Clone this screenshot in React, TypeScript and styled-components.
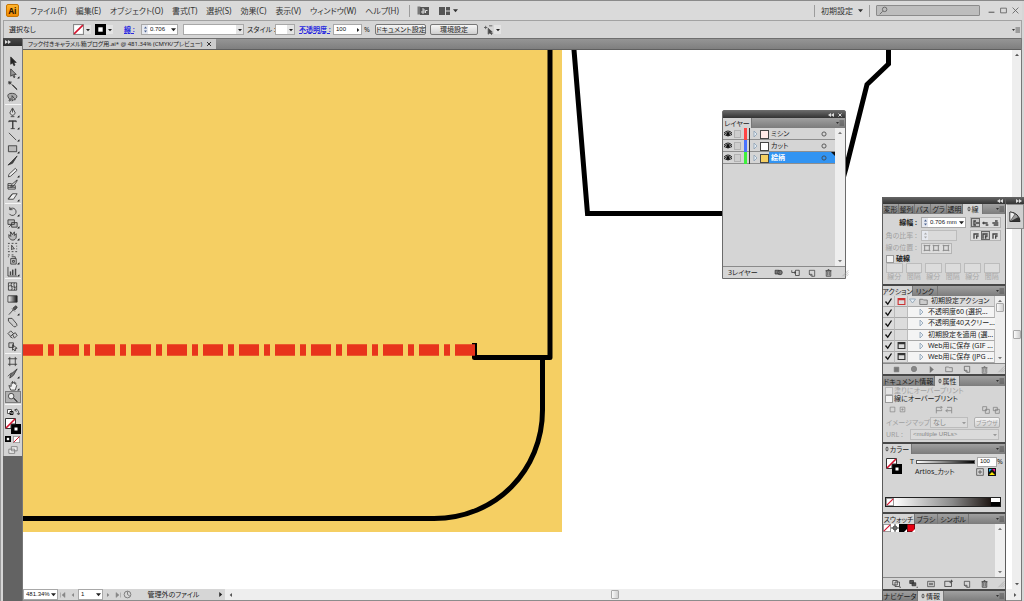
import React from "react";
import styled, { createGlobalStyle, css } from "styled-components";

const Global = createGlobalStyle`
  * { box-sizing: border-box; }
  body { margin: 0; overflow: hidden; background: #d4d4d4; }
  body, button, input, select {
    font-family: "Noto Sans", "Noto Sans CJK JP", sans-serif;
    font-feature-settings: "palt";
    font-size: 7px;
    line-height: 10px;
    color: #222;
  }
  button { border: 0; padding: 0; background: none; white-space: nowrap; }
  input, select { border: 0; margin: 0; padding: 0; min-width: 0; border-radius: 0; outline: 0; }
  svg { display: block; flex: none; }
  a { color: #2a2ae0; }
`;

/* ---------- window frame ---------- */

const Window = styled.div`
  position: relative;
  height: 100vh;
  display: flex;
  flex-direction: column;
  overflow: hidden;
  padding: 0 2px 0 2px;
  background: #d6d6d6;
  border-top: 1px solid #8a8a8a;
  border-left: 1px solid #9a9a9a;
`;

const MenuBar = styled.header`
  display: flex;
  align-items: center;
  height: 19px;
  padding-left: 3px;
  background: #dadada;
`;

const AppLogo = styled.div`
  width: 13px;
  height: 13px;
  margin-right: 11px;
  border: 1px solid #c77400;
  border-radius: 2px;
  background: linear-gradient(#ffb52e, #f08a00);
  color: #2d1500;
  font-size: 8px;
  font-weight: 700;
  line-height: 11px;
  text-align: center;
`;

const Menus = styled.nav`
  display: flex;
  gap: 9px;
  margin-right: 3px;
`;

const MenuButton = styled.button`
  font-size: 8px;
  color: #333;
`;

const MenuDivider = styled.i<{ $m?: number }>`
  width: 1px;
  height: 12px;
  margin: 0 ${(p) => p.$m ?? 7}px;
  background: #9c9c9c;
`;

const Spacer = styled.div`
  flex: 1;
`;

const Search = styled.label`
  display: flex;
  align-items: center;
  width: 104px;
  height: 11px;
  padding-left: 2px;
  border: 1px solid #8b8b8b;
  border-radius: 1px;
  background: #bdbdbd;
  input { flex: 1; height: 8px; background: transparent; }
`;

const WindowButtons = styled.div`
  display: flex;
  gap: 5px;
  margin: 0 3px 0 8px;
`;

const ControlBar = styled.div`
  display: flex;
  align-items: center;
  height: 18px;
  padding-left: 5px;
  border: 1px solid #a2a2a2;
  border-bottom: 0;
  background: #d6d6d6;
`;

const Cell = styled.div<{ $w: number; $gap?: number }>`
  display: flex;
  align-items: center;
  flex: none;
  width: ${(p) => p.$w}px;
  margin-right: ${(p) => p.$gap ?? 0}px;
  white-space: nowrap;
`;

const Link = styled.a`
  font-weight: 700;
  text-decoration: underline dashed 1px;
  white-space: nowrap;
`;

const PushButton = styled.button<{ $w: number; $off?: boolean }>`
  width: ${(p) => p.$w}px;
  height: 11px;
  border: 1px solid ${(p) => (p.$off ? "#b0b0b0" : "#777")};
  border-radius: 2px;
  background: linear-gradient(#f6f6f6, #cfcfcf);
  color: ${(p) => (p.$off ? "#999" : "#222")};
  font-size: ${(p) => (p.$off ? 6 : 7)}px;
  line-height: 8px;
`;

const Field = styled.div<{ $w: number; $off?: boolean; $h?: number }>`
  display: flex;
  align-items: center;
  flex: none;
  width: ${(p) => p.$w}px;
  height: ${(p) => p.$h ?? 11}px;
  border: 1px solid ${(p) => (p.$off ? "#bcbcbc" : "#a8a8a8")};
  background: ${(p) => (p.$off ? "#dadada" : "#fff")};
  input, select {
    flex: 1;
    height: 9px;
    width: 0;
    padding-left: 2px;
    font-family: "Liberation Sans", "Noto Sans CJK JP", sans-serif;
    font-size: 6px;
    line-height: 9px;
    background: transparent;
    appearance: none;
    opacity: 1;
    color: ${(p) => (p.$off ? "#888" : "#111")};
  }
  select { font-size: 7px; }
`;

const ArrowButton = styled.button<{ $plain?: boolean }>`
  flex: none;
  display: grid;
  place-items: center;
  width: 7px;
  height: 9px;
  background: ${(p) => (p.$plain ? "transparent" : "#e4e4e4")};
`;

const SpinBox = styled.button`
  flex: none;
  display: grid;
  place-items: center;
  width: 6px;
  height: 9px;
  background: #e6e9f0;
`;

/* ---------- work area ---------- */

const Work = styled.div`
  flex: 1;
  min-height: 0;
  display: flex;
`;

const ToolColumn = styled.aside`
  width: 20px;
  display: flex;
  flex-direction: column;
  background: #636363;
  border-right: 1px solid #777;
`;

const ToolHead = styled.div`
  height: 8px;
  padding: 2px 2px;
  background: linear-gradient(#4a4a4a, #2e2e2e);
`;

const Tools = styled.div`
  display: flex;
  flex-direction: column;
  padding: 9px 1px 0;
  background: #d3d3d3;
  border-left: 1px solid #999;
`;

const ToolGroup = styled.div`
  display: flex;
  flex-direction: column;
  & + & { margin-top: 1px; padding-top: 1px; border-top: 1px solid #f4f4f4; }
`;

const ToolButton = styled.button<{ $on?: boolean }>`
  display: grid;
  place-items: center;
  height: 12px;
  ${(p) =>
    p.$on &&
    css`
      background: #b2b2b2;
      box-shadow: inset 0 0 0 1px #7d7d7d;
    `}
`;

const Doc = styled.main`
  flex: 1;
  min-width: 0;
  display: flex;
  flex-direction: column;
  border-right: 1px solid #777;
`;

const DocTabs = styled.div`
  display: flex;
  height: 12px;
  background: linear-gradient(#959595, #7f7f7f);
  border-top: 1px solid #6f6f6f;
  border-bottom: 1px solid #5f5f5f;
`;

const DocTab = styled.button`
  display: flex;
  align-items: center;
  gap: 4px;
  padding: 0 4px 0 5px;
  background: #cccccc;
  color: #222;
  font-size: 6px;
  line-height: 10px;
`;

const DocView = styled.div`
  flex: 1;
  min-height: 0;
  display: flex;
`;

const Canvas = styled.div`
  flex: 1;
  min-width: 0;
  overflow: hidden;
  background: #fff;
`;

const VScroll = styled.div<{ $w?: number }>`
  flex: none;
  display: flex;
  flex-direction: column;
  align-items: center;
  justify-content: space-between;
  width: ${(p) => p.$w ?? 9}px;
  padding: 3px 0;
  background: #eeeeee;
`;

const Thumb = styled.i`
  width: 8px;
  height: 9px;
  border: 1px solid #a9a9a9;
  border-radius: 1px;
  background: linear-gradient(90deg, #fafafa, #d0d0d0);
`;

const Track = styled.div<{ $before: number; $after: number; $row?: boolean }>`
  flex: 1;
  display: flex;
  flex-direction: ${(p) => (p.$row ? "row" : "column")};
  align-items: center;
  &::before { content: ""; flex: ${(p) => p.$before}; }
  &::after { content: ""; flex: ${(p) => p.$after}; }
`;

const StatusBar = styled.footer`
  display: flex;
  align-items: center;
  height: 12px;
  background: #d6d6d6;
  border-bottom: 1px solid #8c8c8c;
`;

const StatusText = styled.span`
  flex: 1;
  text-align: center;
`;

const HScroll = styled.div`
  flex: 1;
  height: 11px;
  display: flex;
  align-items: center;
  padding: 0 4px;
  background: #eeeeee;
`;

const Nav = styled.button`
  width: 10px;
  height: 9px;
  display: grid;
  place-items: center;
`;

/* ---------- floating panels ---------- */

const FloatPanel = styled.section`
  position: absolute;
  top: 109px;
  right: 178px;
  width: 124px;
  border: 1px solid #6b6b6b;
  border-radius: 2px 2px 0 0;
  background: #d5d5d5;
`;

const Dock = styled.aside`
  position: absolute;
  top: 196px;
  right: 18px;
  width: 124px;
  border: 1px solid #5c5c5c;
  border-top: 0;
  background: #d5d5d5;
`;

const IconDock = styled.aside`
  position: absolute;
  top: 196px;
  right: 0;
  width: 18px;
`;

const IconDockItem = styled.button`
  display: grid;
  place-items: center;
  width: 18px;
  height: 25px;
  border: 1px solid #8d8d8d;
  border-left-color: #eee;
  background: #cfcfcf;
`;

const Grip = styled.div`
  display: flex;
  align-items: center;
  justify-content: flex-end;
  gap: 3px;
  height: 7px;
  padding: 0 2px;
  background: linear-gradient(#666, #333);
`;

const Section = styled.section`
  & + & { border-top: 2px solid #484848; }
`;

const TabStrip = styled.div`
  display: flex;
  height: 10px;
  background: linear-gradient(#a0a0a0, #7c7c7c);
`;

const Tab = styled.button<{ $on?: boolean; $w: number }>`
  display: flex;
  align-items: center;
  justify-content: center;
  gap: 1px;
  width: ${(p) => p.$w}px;
  line-height: 9px;
  color: ${(p) => (p.$on ? "#222" : "#1c1c1c")};
  background: ${(p) => (p.$on ? "#d5d5d5" : "transparent")};
  border-right: 1px solid #777;
`;

const PanelMenuButton = styled.button`
  margin-left: auto;
  width: 11px;
  height: 10px;
  display: grid;
  place-items: center;
`;

const Row = styled.div<{ $h?: number; $gap?: number; $pad?: string; $off?: boolean }>`
  display: flex;
  align-items: center;
  height: ${(p) => p.$h ?? 13}px;
  gap: ${(p) => p.$gap ?? 0}px;
  padding: ${(p) => p.$pad ?? "0 4px"};
  white-space: nowrap;
  color: ${(p) => (p.$off ? "#a0a0a0" : "#222")};
`;

const PanelBody = styled.div<{ $h: number }>`
  height: ${(p) => p.$h}px;
`;

const RightLabel = styled.label<{ $w: number }>`
  flex: none;
  width: ${(p) => p.$w}px;
  padding-right: 4px;
  text-align: right;
`;

const Segmented = styled.div<{ $w: number }>`
  display: flex;
  justify-content: space-around;
  align-items: center;
  width: ${(p) => p.$w}px;
  height: 11px;
  border: 1px solid #b4b4b4;
  background: #dedede;
`;

const SegButton = styled.button<{ $on?: boolean }>`
  width: 9px;
  height: 9px;
  display: grid;
  place-items: center;
  ${(p) => p.$on && "box-shadow: inset 0 0 0 1px #666; background: #c4c4c4;"}
`;

const Tick = styled.input.attrs({ type: "checkbox" })`
  appearance: none;
  flex: none;
  width: 8px;
  height: 8px;
  border: 1px solid #9a9a9a !important;
  background: #f2f2f2;
  &:disabled { opacity: 0.5; }
`;

const DashGrid = styled.div`
  display: grid;
  grid-template-columns: repeat(6, 1fr);
  column-gap: 3px;
  padding: 0 5px 0 3px;
  color: #a8a8a8;
  text-align: center;
  label { display: flex; flex-direction: column; line-height: 8px; }
  input { width: 100%; height: 10px; background: #dcdcdc; border: 1px solid #bcbcbc; }
`;

const ListBox = styled.div<{ $h: number }>`
  display: flex;
  height: ${(p) => p.$h}px;
  border-bottom: 1px solid #8a8a8a;
`;

const List = styled.ul`
  flex: 1;
  min-width: 0;
  display: flex;
  flex-direction: column;
  margin: 0;
  padding: 0;
  list-style: none;
`;

const ActionRow = styled.li`
  flex: 1;
  min-height: 0;
  display: grid;
  grid-template-columns: 12px 13px 1fr;
  background: #f4f4f4;
  > * {
    display: flex;
    align-items: center;
    border-bottom: 1px solid #a8a8a8;
    border-right: 1px solid #bbb;
  }
`;

const ActionToggle = styled.label`
  justify-content: center;
  background: #dcdcdc;
  input { position: absolute; opacity: 0; }
`;

const ActionName = styled.span<{ $depth: number }>`
  gap: 3px;
  padding-left: ${(p) => (p.$depth ? 10 : 1)}px;
  background: ${(p) => (p.$depth ? "transparent" : "#dcdcdc")};
  white-space: nowrap;
`;

const PanelFooter = styled.div<{ $h?: number }>`
  display: flex;
  align-items: center;
  justify-content: space-between;
  height: ${(p) => p.$h ?? 10}px;
  padding: 0 0 0 8px;
`;

const IconButton = styled.button`
  width: 10px;
  height: 10px;
  display: grid;
  place-items: center;
`;

const LayerRow = styled.li<{ $on?: boolean }>`
  position: relative;
  flex: none;
  display: grid;
  grid-template-columns: 11px 9px 9px 8px 11px 1fr 16px;
  align-items: center;
  height: 12px;
  border-bottom: 1px solid #8e8e8e;
  background: ${(p) => (p.$on ? "linear-gradient(90deg, #d5d5d5 46px, #3294f2 46px)" : "#d5d5d5")};
  color: ${(p) => (p.$on ? "#fff" : "#222")};
  font-weight: ${(p) => (p.$on ? 700 : 400)};
`;

const SelectedMark = styled.i`
  position: absolute;
  top: 0;
  right: 0;
  border-top: 4px solid #111;
  border-left: 4px solid transparent;
`;

const LockBox = styled.i`
  width: 7px;
  height: 8px;
  border: 1px solid #b2b2b2;
  background: #cecece;
`;

const LayerColor = styled.i<{ $c: string }>`
  width: 7px;
  height: 12px;
  border-right: 1px solid #333;
  background: linear-gradient(90deg, transparent 1px, ${(p) => p.$c} 1px, ${(p) => p.$c} 4px, transparent 4px);
`;

const LayerThumb = styled.i<{ $c: string }>`
  width: 9px;
  height: 9px;
  border: 1px solid #444;
  background: ${(p) => p.$c};
  svg { margin: 0; }
`;

const TintTrack = styled.div`
  flex: none;
  width: 59px;
  height: 4px;
  margin: 0 2px;
  border: 1px solid #555;
  background: linear-gradient(90deg, #fff, #000);
`;

const Spectrum = styled.div`
  display: flex;
  height: 10px;
  margin: 0 4px 0 2px;
  border: 1px solid #222;
`;

const SpectrumRamp = styled.div`
  flex: 1;
  background: linear-gradient(90deg, #fff, #8a8a8a 60%, #1e1613);
`;

const SpectrumEnds = styled.div`
  width: 9px;
  background: linear-gradient(#fff 50%, #000 50%);
`;

const Swatches = styled.div`
  flex: 1;
  display: flex;
  align-items: flex-start;
`;

/* ---------- drawings ---------- */

type IconProps = { d: string; s?: number; fill?: string; stroke?: string; sw?: number };
const Icon = ({ d, s = 10, fill = "none", stroke = "#333", sw = 1 }: IconProps) => (
  <svg width={s} height={s} viewBox="0 0 12 12" aria-hidden="true">
    <path d={d} fill={fill} stroke={stroke} strokeWidth={sw} />
  </svg>
);

const Tri = ({ dir = "down", c = "#222", s = 5 }: { dir?: string; c?: string; s?: number }) => {
  const d: Record<string, string> = {
    down: "M0 1.5h6L3 5z",
    up: "M0 4.5h6L3 1z",
    left: "M4.5 0v6L1 3z",
    right: "M1.5 0v6L5 3z",
  };
  return (
    <svg width={s} height={s} viewBox="0 0 6 6" aria-hidden="true">
      <path d={d[dir]} fill={c} />
    </svg>
  );
};

const Spin = ({ off }: { off?: boolean }) => (
  <SpinBox aria-label="増減">
    <svg width="5" height="9" viewBox="0 0 5 9">
      <path d="M1 3.5h3L2.5 1.5zM1 5.5h3L2.5 7.5z" fill={off ? "#aaa" : "#4c6390"} />
    </svg>
  </SpinBox>
);

const Cycle = () => (
  <svg width="4" height="6" viewBox="0 0 4 6" aria-hidden="true">
    <path d="M0 2.5L2 .5l2 2zM0 3.500h4l-2 2z" fill="#555" />
  </svg>
);

const Disclosure = ({ open }: { open?: boolean }) => (
  <svg width="7" height="8" viewBox="0 0 7 8">
    <path d={open ? "M.5 2h6l-3 4z" : "M2 1v6l3-3z"} fill="#e6eef5" stroke="#8ba0b3" strokeWidth=".8" />
  </svg>
);

const Flyout = () => (
  <PanelMenuButton aria-label="パネルメニュー">
    <svg width="8" height="6" viewBox="0 0 8 6">
      <path d="M0 2h3L1.500 4z" fill="#333" />
      <path d="M3.500 1H8M3.500 3H8M3.500 5H8" stroke="#444" strokeWidth=".8" />
    </svg>
  </PanelMenuButton>
);

const Chevrons = ({ right, c = "#ddd" }: { right?: boolean; c?: string }) => (
  <svg width="6" height="4" viewBox="0 0 6 4">
    <path d={right ? "M0 0l3 2-3 2zM3 0l3 2-3 2z" : "M3 0L0 2l3 2zM6 0L3 2l3 2z"} fill={c} />
  </svg>
);

const SizeGrip = () => <Icon s={8} d="M11 2L2 11M11 5l-6 6M11 8l-3 3" stroke="#a4a4a4" />;

const NoneSwatch = ({ s = 10 }: { s?: number }) => (
  <svg width={s} height={s} viewBox="0 0 10 10">
    <rect x=".5" y=".5" width="9" height="9" fill="#fff" stroke="#888" />
    <path d="M1 9L9 1" stroke="#d3122d" strokeWidth="1.400" />
  </svg>
);

const StrokeSwatch = ({ s = 10 }: { s?: number }) => (
  <svg width={s} height={s} viewBox="0 0 10 10">
    <rect width="10" height="10" fill="#000" />
    <rect x="3" y="3" width="4" height="4" fill="#fff" />
  </svg>
);

const FillStroke = () => (
  <svg width="17" height="17" viewBox="0 0 17 17">
    <rect x="6" y="6" width="10" height="10" fill="#000" />
    <rect x="9.500" y="9.500" width="3" height="3" fill="#fff" />
    <path d="M.5 .5h10v5.500h-4.500v4.500h-5.500z" fill="#fff" stroke="#333" />
    <path d="M1 10L10 1" stroke="#d3122d" strokeWidth="1.600" />
  </svg>
);

const Artwork = () => (
  <svg width="100%" height="100%" role="img" aria-label="キャラメル箱の展開図">
    <g transform="translate(-23 -50)">
      <rect x="0" y="40" width="562" height="492" fill="#f5cf63" />
      <g fill="none" stroke="#000" strokeWidth="5">
        <path d="M550 40V357.500H474.500V343" strokeLinejoin="round" />
        <path d="M542.500 358V410C542.500 470 496 518.500 434 518.500H0" />
        <path d="M574.500 40L574 50L587.500 213.500H833L846 168L867 84.500L888.500 64V40" />
      </g>
      <path d="M475 350H0" stroke="#e8331c" strokeWidth="11.500" strokeDasharray="20 5 6 5" />
    </g>
  </svg>
);

type Tool = { n: string; d: string; fill?: string; m?: boolean };
const toolGroups: Tool[][] = [
  [
    { n: "選択", d: "M4 1v8l2-1.500 1.500 3 1.200-.6L7.300 7H10z", fill: "#222" },
    { n: "ダイレクト選択", d: "M4 1v8l2-1.500 1.500 3 1.200-.6L7.300 7H10z", fill: "#999", m: true },
    { n: "自動選択", d: "M5 5l6 6M3 1v4M1 3h4M1.500 1.500l3 3M4.500 1.500l-3 3M6 5l5 5" },
    { n: "なげなわ", d: "M3 8C-1 4 1 1 6 1.500s6 4 3 6M3 8c-2 1 0 3 1 1s-1-2-1-1M5.500 4v6l1.500-1.500H9z", fill: "#aaa" },
  ],
  [
    { n: "ペン", d: "M6 1L3 6.500 5 9h2l2-2.500zM6 2v4M4 10.500h4", fill: "#ddd", m: true },
    { n: "文字", d: "M2 3.500V2h8v1.500M6 2v8.500M6.500 2v8.500M4 10.500h4.500M2 2.500h8", m: true },
    { n: "直線", d: "M2 2l8 8", m: true },
    { n: "長方形", d: "M1.500 3h9v6.500h-9z", fill: "#bbb", m: true },
    { n: "ブラシ", d: "M11 1L5 7 1 11l5-2 5-8", fill: "#444" },
    { n: "鉛筆", d: "M9 1.500l2 2L4 10l-2.500.8L2 8z", fill: "#eee", m: true },
    { n: "塗りブラシ", d: "M1 5v6h8V7M1 5h4M1 7h7M1 9h8M11 1L5 6 4 9l3-1 4-6z", fill: "#ddd" },
    { n: "消しゴム", d: "M6 3h5L7 9H1.500zM1.500 9v-1L6 3", fill: "#eee", m: true },
  ],
  [
    { n: "回転", d: "M3 3.500a4 4 0 1 1-.5 5M3 1v3h3", m: true },
    { n: "拡大・縮小", d: "M1 2h7v5H1zM5 5h6v5H5zM2 10l3-3", fill: "#bbb", m: true },
    { n: "ワープ", d: "M2 8c2 4 7 4 8 0V4L8 6V2L6 5 4 2v5L2 5zM3 2l2 2", fill: "#bbb", m: true },
    { n: "自由変形", d: "M1 1.500h2M5 1.500h2M9 1.500h2M1 10.500h2M5 10.500h2M9 10.500h2M1.500 4v1M1.500 7v1M10.500 4v1M10.500 7v1M5 3.500v5l1-1 2 0z" },
    { n: "シンボルスプレー", d: "M4 5h6v6H4zM5 3h4v2M1 1h2M1 3h1M5 1h2M6 7h2v2H6z", fill: "#ccc", m: true },
    { n: "棒グラフ", d: "M1 1v10h10M3.500 10V6M4 10V6M6 10V4M6.500 10V4M9 10V3M9.500 10V3", m: true },
  ],
  [
    { n: "メッシュ", d: "M1.500 2h9v8h-9zM1.500 6c3-3 6 3 9 0M5 2c-2 3 2 5 0 8M8 2c-2 3 2 5 0 8" },
    { n: "グラデーション", d: "M1 3h10v7H1z", fill: "url(#toolRamp)" },
    { n: "スポイト", d: "M2 10.500L7 5M6.500 3.500l2 2 2-2a1 1 0 0 0-2-2zM5.500 4l3 3", fill: "#555", m: true },
    { n: "ブレンド", d: "M1.500 1.500h4l5 6a2 2 0 1 1-4 2l-5-5z", fill: "#ccc" },
    { n: "ライブペイント", d: "M1 5l3-3 3 3-3 3zM6 6l3-2 2 3-3 3zM3 8l3 2", fill: "#ccc" },
    { n: "ライブペイント選択", d: "M2 2h5v5H2zM6 4v6l1.500-1 1 2 1-1L9 8h2z", fill: "#ccc" },
  ],
  [
    { n: "アートボード", d: "M3 1v10M9 1v10M1 3h10M1 9h10" },
    { n: "スライス", d: "M11 1L4 7l-1 4 4-3 4-7M1 9l4-4", fill: "#777", m: true },
    { n: "手のひら", d: "M2 6l2 5h5l1.500-5-1-1V3L8 4V2L6 4V1.500L4.500 4v3z", fill: "#f2f2f2", m: true },
    { n: "ズーム", d: "M7 7l4 4M7.500 6.500l4 4M1.500 4.500a3 3 0 1 0 6 0 3 3 0 1 0-6 0z", fill: "#eee" },
  ],
];

const ToolPalette = () => (
  <ToolColumn>
    <ToolHead>
      <Chevrons right />
    </ToolHead>
    <svg width="0" height="0">
      <linearGradient id="toolRamp">
        <stop stopColor="#fff" />
        <stop offset="1" stopColor="#111" />
      </linearGradient>
    </svg>
    <Tools>
      {toolGroups.map((g, i) => (
        <ToolGroup key={i}>
          {g.map((t) => (
            <ToolButton key={t.n} aria-label={t.n} $on={t.n === "ズーム"}>
              <svg width="14" height="11" viewBox="-1 0 15 12">
                <path d={t.d} fill={t.fill ?? "none"} stroke="#333" strokeWidth=".9" />
                {t.m && <path d="M13.500 9v2.500H11z" fill="#111" />}
              </svg>
            </ToolButton>
          ))}
        </ToolGroup>
      ))}
      <ToolGroup>
        <ToolButton aria-label="初期設定の塗りと線">
          <svg width="14" height="10" viewBox="0 0 14 10">
            <path d="M1.500 2.500h4v4h-4z" fill="#fff" stroke="#333" strokeWidth=".8" />
            <path d="M4 4.500h3v3H4z" fill="none" stroke="#111" />
            <path d="M9 3c3-1 4 1 3.500 4M11 2L8.500 3l2 1.500M11 6l1.500 2L14 6" fill="none" stroke="#333" strokeWidth=".8" />
          </svg>
        </ToolButton>
      </ToolGroup>
      <Row $h={16} $pad="0">
        <FillStroke />
      </Row>
      <Row $h={10} $pad="0" $gap={2}>
        <StrokeSwatch s={6} />
        <NoneSwatch s={7} />
      </Row>
      <ToolButton aria-label="スクリーンモード">
        <Icon d="M4 2h7v5H4zM1 5h7v5H1z" fill="#eee" stroke="#777" />
      </ToolButton>
    </Tools>
  </ToolColumn>
);

/* ---------- panels ---------- */

const trash = "M3 4h6v7H3zM2 3.500h8M5 2h2M5 5v5M7 5v5";
const page = "M2 2h8v9H6L2 8zM6 11V8H2";
const folder = "M1 10V3h4l1 1h5v6z";

const VBar = ({ thumb }: { thumb?: boolean }) => (
  <VScroll $w={10}>
    <Tri dir="up" s={4} c="#777" />
    {thumb && <Thumb />}
    {thumb && <Spacer />}
    <Tri s={4} c="#777" />
  </VScroll>
);

const layers = [
  { n: "ミシン", c: "#ff4545", t: "#ffe9e6" },
  { n: "カット", c: "#4a73ff", t: "#ffffff" },
  { n: "絵柄", c: "#3df03d", t: "#f5cf63", on: true },
];

const LayersPanel = () => (
  <FloatPanel>
    <Grip>
      <Chevrons />
      <Icon d="M3 3l6 6M9 3l-6 6" s={6} stroke="#ddd" sw={2} />
    </Grip>
    <TabStrip>
      <Tab $on $w={29}>レイヤー</Tab>
      <Flyout />
    </TabStrip>
    <ListBox $h={139}>
      <List>
        {layers.map((l) => (
          <LayerRow key={l.n} $on={l.on}>
            <svg width="10" height="8" viewBox="0 0 10 8">
              <path d="M1 4.500Q5 .5 9 4.500 5 7.500 1 4.500z" fill="#fff" stroke="#222" />
              <circle cx="5" cy="4.200" r="1.700" fill="#111" />
              <path d="M1 3Q5-1 9 3" fill="none" stroke="#222" />
            </svg>
            <LockBox />
            <LayerColor $c={l.c} />
            <Disclosure />
            <LayerThumb $c={l.t} />
            <span>{l.n}</span>
            <Icon d="M3.500 6a2.500 2.500 0 1 0 5 0 2.500 2.500 0 1 0-5 0z" stroke="#444" />
            {l.on && <SelectedMark />}
          </LayerRow>
        ))}
      </List>
      <VBar />
    </ListBox>
    <Row $h={11} $pad="0 0 0 5px" $gap={8}>
      <span>3レイヤー</span>
      <Spacer />
      <IconButton aria-label="クリッピングマスク"><Icon s={9} d="M1.500 3h5v5h-5zM5 6a3 3 0 1 0 6 0 3 3 0 1 0-6 0z" fill="#777" /></IconButton>
      <IconButton aria-label="サブレイヤー"><Icon s={9} d="M1 3v3h4M4 5l2 1-2 1M6 3h5v7H6z" /></IconButton>
      <IconButton aria-label="新規レイヤー"><Icon s={8} d={page} /></IconButton>
      <IconButton aria-label="削除"><Icon s={9} d={trash} /></IconButton>
      <SizeGrip />
    </Row>
  </FloatPanel>
);

const capIcons = ["M3 2v8M3 3h3M3 9h3M5 6h6", "M2 6h8M4 4v4M7 9h4", "M2 6h9M6 3h4M4 9h7"];

const StrokePanel = () => (
  <Section>
    <TabStrip>
      {["変形", "整列", "パス", "グラ", "透明"].map((t) => (
        <Tab key={t} $w={16}>{t}</Tab>
      ))}
      <Tab $on $w={20}><Cycle />線</Tab>
      <Flyout />
    </TabStrip>
    <PanelBody $h={70}>
      <Row $h={15} $pad="2px 4px 0 0">
        <RightLabel $w={38} htmlFor="weight"><b>線幅 :</b></RightLabel>
        <Field $w={45}>
          <Spin />
          <input id="weight" defaultValue="0.706 mm" />
          <ArrowButton $plain aria-label="線幅一覧"><Tri /></ArrowButton>
        </Field>
        <Spacer />
        <Segmented $w={31}>
          {capIcons.map((d, i) => (
            <SegButton key={d} $on={i === 0} aria-label={"線端" + (i + 1)}><Icon s={8} d={d} sw={2} stroke="#444" /></SegButton>
          ))}
        </Segmented>
      </Row>
      <Row $off $pad="0 4px 0 0">
        <RightLabel $w={38} htmlFor="miter">角の比率 :</RightLabel>
        <Field $w={36} $off>
          <Spin off />
          <input id="miter" disabled />
        </Field>
        <Spacer />
        <Segmented $w={31}>
          {[0, 1, 2].map((i) => (
            <SegButton key={i} $on={i === 1} aria-label={"角の形状" + (i + 1)}><Icon s={8} d="M2 3h8M3 3v7M6 6h4M7 6v4" sw={2} stroke="#444" /></SegButton>
          ))}
        </Segmented>
      </Row>
      <Row $h={12} $off $pad="0">
        <RightLabel as="span" $w={38}>線の位置 :</RightLabel>
        <Segmented $w={31}>
          {[0, 1, 2].map((i) => (
            <SegButton key={i} disabled aria-label={"線の位置" + (i + 1)}><Icon s={8} d="M2.500 2.500h7v7h-7zM1 2h2M9 2h2M1 10h2M9 10h2" stroke="#888" sw={1.500} /></SegButton>
          ))}
        </Segmented>
      </Row>
      <Row $h={9} $pad="0 3px" $gap={2}>
        <Tick id="dashed" />
        <label htmlFor="dashed"><b>破線</b></label>
      </Row>
      <DashGrid>
        {["線分", "間隔", "線分", "間隔", "線分", "間隔"].map((t, i) => (
          <label key={i}><input disabled />{t}</label>
        ))}
      </DashGrid>
    </PanelBody>
  </Section>
);

const actions = [
  { n: "初期設定アクション", dialog: "#c33" },
  { n: "不透明度60 (選択..." },
  { n: "不透明度40スクリー..." },
  { n: "初期設定を適用 (選..." },
  { n: "Web用に保存 (GIF ...", dialog: "#333" },
  { n: "Web用に保存 (JPG ...", dialog: "#333" },
];

const ActionsPanel = () => (
  <Section>
    <TabStrip>
      <Tab $on $w={30}>アクション</Tab>
      <Tab $w={25}>リンク</Tab>
      <Flyout />
    </TabStrip>
    <ListBox $h={68}>
      <List>
        {actions.map((a, i) => (
          <ActionRow key={a.n}>
            <ActionToggle aria-label={a.n}>
              <input type="checkbox" defaultChecked />
              <Icon s={9} d="M2 6l3 3.500L10 2" sw={1.800} stroke="#111" />
            </ActionToggle>
            <ActionToggle as="span">
              {a.dialog && <Icon s={9} d="M1.500 2h9v8h-9zM2 3.500h8" stroke={a.dialog} sw={1.500} />}
            </ActionToggle>
            <ActionName $depth={i ? 1 : 0}>
              <Disclosure open={i === 0} />
              {i === 0 && <Icon s={9} d={folder} fill="#ccc" stroke="#666" />}
              {a.n}
            </ActionName>
          </ActionRow>
        ))}
      </List>
      <VBar thumb />
    </ListBox>
    <PanelFooter>
      <IconButton aria-label="停止"><Icon s={7} d="M2 2h8v8H2z" fill="#777" stroke="#777" /></IconButton>
      <IconButton aria-label="記録"><Icon s={8} d="M2 6a4 4 0 1 0 8 0 4 4 0 1 0-8 0z" fill="#888" stroke="#777" /></IconButton>
      <IconButton aria-label="実行"><Tri dir="right" c="#777" s={7} /></IconButton>
      <IconButton aria-label="新規セット"><Icon s={8} d={folder} stroke="#666" /></IconButton>
      <IconButton aria-label="新規アクション"><Icon s={8} d={page} stroke="#555" /></IconButton>
      <IconButton aria-label="削除"><Icon s={9} d={trash} stroke="#666" /></IconButton>
      <SizeGrip />
    </PanelFooter>
  </Section>
);

const AttributesPanel = () => (
  <Section>
    <TabStrip>
      <Tab $w={52}>ドキュメント情報</Tab>
      <Tab $on $w={25}><Cycle />属性</Tab>
      <Flyout />
    </TabStrip>
    <PanelBody $h={56}>
      <Row $h={9} $off $pad="0 2px" $gap={1}>
        <Tick id="opFill" disabled /><label htmlFor="opFill">塗りにオーバープリント</label>
      </Row>
      <Row $h={8} $pad="0 2px" $gap={1}>
        <Tick id="opStroke" /><label htmlFor="opStroke">線にオーバープリント</label>
      </Row>
      <Row $h={13} $pad="0 4px">
        <IconButton aria-label="中心を隠す"><Icon s={7} d="M2 2h8v8H2z" stroke="#777" /></IconButton>
        <IconButton aria-label="中心を表示"><Icon s={7} d="M2 2h8v8H2zM5 5h2v2H5z" stroke="#777" /></IconButton>
        <Spacer />
        <IconButton aria-label="パスの方向反転オフ"><Icon s={8} d="M2 11V2h8M8 0l3 2-3 2M2 7h8V5" stroke="#777" /></IconButton>
        <IconButton aria-label="パスの方向反転オン"><Icon s={8} d="M10 11V7H2M4 5L1 7l3 2M10 7V2H3" stroke="#777" /></IconButton>
        <Spacer />
        <IconButton aria-label="奇偶規則"><Icon s={8} d="M1 1h6v6H1zM5 5h6v6H5z" stroke="#777" /></IconButton>
        <IconButton aria-label="非ゼロ規則"><Icon s={8} d="M2 2h6v5H2zM5 5h6v6H5z" stroke="#777" /></IconButton>
      </Row>
      <Row $h={13} $off $pad="0 5px 0 3px">
        <Cell $w={44}><label htmlFor="imap">イメージマップ :</label></Cell>
        <Field $w={38} $off>
          <select id="imap" disabled><option>なし</option></select>
          <ArrowButton as="span" $plain><Tri c="#999" s={4} /></ArrowButton>
        </Field>
        <Spacer />
        <PushButton $w={26} $off disabled>ブラウザ</PushButton>
      </Row>
      <Row $h={11} $off $pad="0 5px 0 3px">
        <Cell $w={24}><label htmlFor="url">URL :</label></Cell>
        <Field $w={89} $off>
          <input id="url" disabled defaultValue="<multiple URLs>" />
          <ArrowButton $plain aria-label="URL一覧"><Tri c="#999" s={4} /></ArrowButton>
        </Field>
      </Row>
    </PanelBody>
  </Section>
);

const ColorPanel = () => (
  <Section>
    <TabStrip>
      <Tab $on $w={29}><Cycle />カラー</Tab>
      <Flyout />
    </TabStrip>
    <PanelBody $h={58}>
      <Row $h={23} $pad="2px 1px 0 3px" $gap={7}>
        <FillStroke />
        <div>
          <Row $h={11} $pad="0">
            <span>T</span>
            <TintTrack />
            <Field $w={20} $h={10}><input aria-label="濃度" defaultValue="100" /></Field>
            <Cell $w={8}>%</Cell>
          </Row>
          <Row $h={10} $pad="0 9px 0 5px" $gap={4}>
            <span>Artios_カット</span>
            <Spacer />
            <Icon s={8} d="M1 1h10v10H1zM6 3v6M3 6h6" />
            <svg width="8" height="8" viewBox="0 0 8 8">
              <rect width="8" height="8" fill="#111" />
              <path d="M1 1h3l-3 3z" fill="#16b5e8" />
              <path d="M7 1v3L4 1z" fill="#e81690" />
              <path d="M4 4l3 3H1z" fill="#ffe600" />
            </svg>
          </Row>
        </div>
      </Row>
      <Row $h={20} />
      <Spectrum>
        <NoneSwatch s={8} />
        <SpectrumRamp />
        <SpectrumEnds />
      </Spectrum>
    </PanelBody>
  </Section>
);

const SwatchesPanel = () => (
  <Section>
    <TabStrip>
      <Tab $on $w={32}>スウォッチ</Tab>
      <Tab $w={23}>ブラシ</Tab>
      <Tab $w={31}>シンボル</Tab>
      <Flyout />
    </TabStrip>
    <ListBox $h={54}>
      <Swatches>
        <NoneSwatch s={8} />
        <svg width="8" height="8" viewBox="0 0 8 8">
          <rect width="8" height="8" fill="#fff" />
          <path d="M4 0v8M0 4h8M2 4a2 2 0 1 0 4 0 2 2 0 1 0-4 0" fill="none" stroke="#222" strokeWidth=".8" />
        </svg>
        <svg width="8" height="8" viewBox="0 0 8 8"><rect width="8" height="8" /><path d="M8 5v3H5z" fill="#fff" /></svg>
        <svg width="8" height="8" viewBox="0 0 8 8"><rect width="8" height="8" fill="#e60012" stroke="#111" /><path d="M8 5v3H5z" fill="#fff" /></svg>
      </Swatches>
      <VBar />
    </ListBox>
    <PanelFooter $h={11}>
      <IconButton aria-label="ライブラリ"><Icon s={9} d="M1 2h6v6H1zM4 4h6v6H4zM10 11h2" fill="#ddd" /></IconButton>
      <IconButton aria-label="種類"><Icon s={9} d="M1 2h5v4H1zM4 5h5v4H4zM10 11h2" fill="#555" /></IconButton>
      <IconButton aria-label="オプション"><Icon s={8} d="M1 2h10v8H1zM3 5h6M3 7h6" /></IconButton>
      <IconButton aria-label="新規グループ"><Icon s={9} d="M1 10V3h7v2h2v5zM10 1v4M8 3h4" /></IconButton>
      <IconButton aria-label="新規スウォッチ"><Icon s={8} d={page} /></IconButton>
      <IconButton aria-label="削除"><Icon s={9} d={trash} /></IconButton>
      <SizeGrip />
    </PanelFooter>
  </Section>
);

const menus = ["ファイル(F)", "編集(E)", "オブジェクト(O)", "書式(T)", "選択(S)", "効果(C)", "表示(V)", "ウィンドウ(W)", "ヘルプ(H)"];

export default function App() {
  return (
    <>
      <Global />
      <Window>
        <MenuBar>
          <AppLogo>Ai</AppLogo>
          <Menus>
            {menus.map((m) => (
              <MenuButton key={m}>{m}</MenuButton>
            ))}
          </Menus>
          <MenuDivider />
          <svg width="12" height="9" viewBox="0 0 12 9">
            <path d="M.5 .5h3v8h-3z" fill="#777" />
            <rect x="3" y="1" width="9" height="8" fill="#555" />
            <path d="M5 3h2v2H5v2h2V5M8.500 7V4.500h2" stroke="#ddd" fill="none" />
          </svg>
          <Cell $w={10} />
          <svg width="11" height="8" viewBox="0 0 11 8">
            <path d="M0 0h6v8H0zM7 0h4v3.500H7zM7 4.500h4V8H7z" fill="#555" />
          </svg>
          <Cell $w={3} />
          <Tri c="#333" />
          <Spacer />
          <MenuDivider $m={6} />
          <MenuButton>初期設定</MenuButton>
          <Cell $w={5} />
          <Tri c="#333" />
          <MenuDivider $m={6} />
          <Search>
            <Icon s={9} d="M4.500 4.500a3 3 0 1 0 6 0 3 3 0 1 0-6 0zM5 7l-4 4" stroke="#555" />
            <input aria-label="検索" />
          </Search>
          <WindowButtons>
            <button aria-label="最小化"><Icon s={7} d="M1 9h10" stroke="#666" sw={2} /></button>
            <button aria-label="最大化"><Icon s={7} d="M1 2h10v8H1z" stroke="#666" sw={1.500} /></button>
            <button aria-label="閉じる"><Icon s={7} d="M1 1l10 10M11 1L1 11" stroke="#666" sw={1.500} /></button>
          </WindowButtons>
        </MenuBar>

        <ControlBar>
          <Cell $w={64}>選択なし</Cell>
          <Cell $w={18} $gap={4}>
            <NoneSwatch s={11} />
            <ArrowButton aria-label="塗り"><Tri s={4} /></ArrowButton>
          </Cell>
          <Cell $w={18} $gap={11}>
            <StrokeSwatch s={11} />
            <ArrowButton aria-label="線の色"><Tri s={4} /></ArrowButton>
          </Cell>
          <Cell $w={14} $gap={3}><Link href="#stroke">線 :</Link></Cell>
          <Field $w={37}>
            <Spin />
            <input aria-label="線幅" defaultValue="0.706" />
            <ArrowButton $plain aria-label="線幅一覧"><Tri /></ArrowButton>
          </Field>
          <Cell $w={5} />
          <Field $w={61}>
            <input aria-label="ブラシ" />
            <ArrowButton aria-label="ブラシ一覧"><Tri s={4} /></ArrowButton>
          </Field>
          <Cell $w={3} />
          <Cell $w={28}>スタイル :</Cell>
          <Field $w={20}>
            <input aria-label="グラフィックスタイル" />
            <ArrowButton aria-label="スタイル一覧"><Tri s={4} /></ArrowButton>
          </Field>
          <Cell $w={4} />
          <Cell $w={34}><Link href="#opacity">不透明度 :</Link></Cell>
          <Field $w={29}>
            <input aria-label="不透明度" defaultValue="100" />
            <ArrowButton $plain aria-label="不透明度スライダ"><Tri dir="right" s={4} /></ArrowButton>
          </Field>
          <Cell $w={2} />
          <Cell $w={11}>%</Cell>
          <PushButton $w={51}>ドキュメント設定</PushButton>
          <Cell $w={4} />
          <PushButton $w={48}>環境設定</PushButton>
          <Cell $w={6} />
          <Icon s={10} d="M5 4v7l2-1.500 2 2 1-1-2-2h2zM2 1v4M0 3h4M6 1h4" fill="#444" stroke="#555" />
          <ArrowButton aria-label="類似オブジェクト"><Tri s={4} /></ArrowButton>
          <Flyout />
        </ControlBar>

        <Work>
          <ToolPalette />
          <Doc>
            <DocTabs>
              <DocTab>
                フック付きキャラメル箱ブログ用.ai* @ 481.34% (CMYK/プレビュー)
                <Icon s={6} d="M2 2l8 8M10 2l-8 8" sw={2} />
              </DocTab>
            </DocTabs>
            <DocView>
              <Canvas>
                <Artwork />
              </Canvas>
              <VScroll>
                <Tri dir="up" s={4} c="#555" />
                <Track $before={53} $after={47}><Thumb /></Track>
                <Tri s={4} c="#555" />
              </VScroll>
            </DocView>
            <StatusBar>
              <Field $w={35}>
                <input aria-label="ズーム" defaultValue="481.34%" />
                <ArrowButton $plain aria-label="ズーム一覧"><Tri /></ArrowButton>
              </Field>
              <Nav aria-label="最初"><Icon s={6} d="M1 1v10M10 1L4 6l6 5z" fill="#888" stroke="#888" /></Nav>
              <Nav aria-label="前へ"><Tri dir="left" c="#888" s={4} /></Nav>
              <Field $w={25}>
                <input aria-label="アートボード" defaultValue="1" />
                <ArrowButton $plain aria-label="アートボード一覧"><Tri /></ArrowButton>
              </Field>
              <Nav aria-label="次へ"><Tri dir="right" c="#888" s={4} /></Nav>
              <Nav aria-label="最後"><Icon s={6} d="M11 1v10M2 1l6 5-6 5z" fill="#888" stroke="#888" /></Nav>
              <Icon s={9} d="M1.500 6a4.500 4.500 0 1 0 9 0 4.500 4.500 0 1 0-9 0zM6 6V2M6 6l3 2" stroke="#666" />
              <Cell $w={83}>
                <StatusText>管理外のファイル</StatusText>
              </Cell>
              <Nav aria-label="ステータス"><Tri dir="right" /></Nav>
              <HScroll>
                <Tri dir="left" s={4} c="#555" />
                <Track $row $before={49} $after={51}><Thumb /></Track>
                <Tri dir="right" s={4} c="#555" />
              </HScroll>
            </StatusBar>
          </Doc>
        </Work>

        <LayersPanel />

        <Dock>
          <Grip><Chevrons /></Grip>
          <StrokePanel />
          <ActionsPanel />
          <AttributesPanel />
          <ColorPanel />
          <SwatchesPanel />
          <Section>
            <TabStrip>
              <Tab $w={35}>ナビゲータ</Tab>
              <Tab $on $w={26}><Cycle />情報</Tab>
              <Flyout />
            </TabStrip>
          </Section>
        </Dock>

        <IconDock>
          <Grip><Chevrons right /></Grip>
          <IconDockItem aria-label="カラーガイド">
            <svg width="12" height="12" viewBox="0 0 12 12">
              <path d="M1 1a10 10 0 0 1 10 9.500H1z" fill="#999" stroke="#222" />
              <path d="M1 1a10 10 0 0 1 5 2L1 10.500z" fill="#eee" stroke="#333" strokeWidth=".6" />
              <path d="M1 10.500L9.500 6l1.500 4.500z" fill="#333" />
            </svg>
          </IconDockItem>
        </IconDock>
      </Window>
    </>
  );
}
